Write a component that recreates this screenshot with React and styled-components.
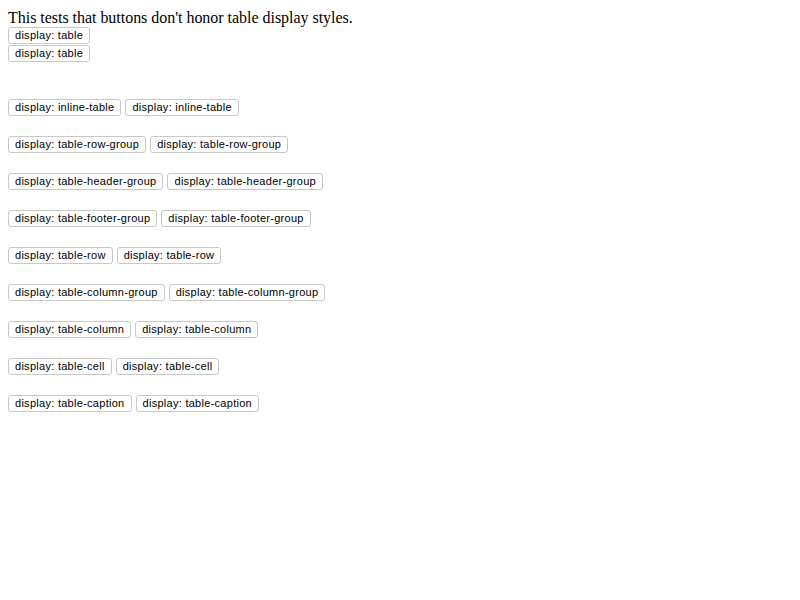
import { createGlobalStyle, styled } from "styled-components";

const GlobalStyle = createGlobalStyle`
  body {
    margin: 8px;
    background: #fff;
    color: #000;
    font-family: "Liberation Serif", "Times New Roman", serif;
    font-size: 16px;
  }
`;

const displays = [
  "inline-table",
  "table-row-group",
  "table-header-group",
  "table-footer-group",
  "table-row",
  "table-column-group",
  "table-column",
  "table-cell",
  "table-caption",
];

function App() {
  return (
    <>
      <GlobalStyle />
      <Intro>This tests that buttons don't honor table display styles.</Intro>
      <Stack>
        <Button>display: table</Button>
        <Button>display: table</Button>
      </Stack>
      <Rows>
        {displays.map((d) => (
          <Row key={d}>
            <Button>display: {d}</Button>
            <Button>display: {d}</Button>
          </Row>
        ))}
      </Rows>
    </>
  );
}

const Intro = styled.div`
  line-height: 19px;
  letter-spacing: -0.03px;
`;

const Stack = styled.div`
  display: flex;
  flex-direction: column;
  align-items: flex-start;
  gap: 1px;
`;

const Rows = styled.div`
  display: flex;
  flex-direction: column;
  gap: 20px;
  margin-top: 37px;
`;

const Row = styled.div`
  display: flex;
  gap: 4px;
`;

const Button = styled.button`
  font-family: "Liberation Sans", Arial, sans-serif;
  font-size: 11px;
  line-height: 13px;
  letter-spacing: 0.28px;
  height: 17px;
  padding: 1px 6px;
  color: #000;
  background: #fff;
  border: 1px solid #c8c8c8;
  border-radius: 3px;
  box-sizing: border-box;
`;

export default App;
